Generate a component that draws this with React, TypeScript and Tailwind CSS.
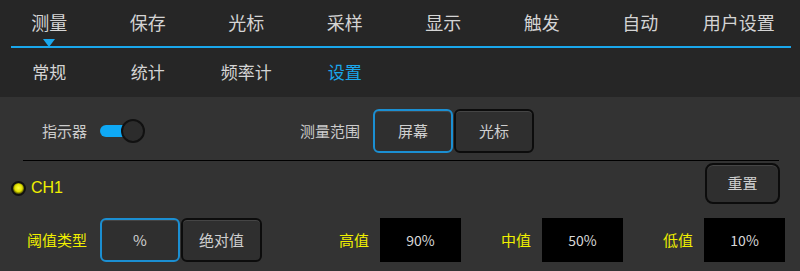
import React from 'react';

const FONT = "font-['Noto_Sans_CJK_SC','Noto_Sans',sans-serif]";

const mainTabs = ['测量', '保存', '光标', '采样', '显示', '触发', '自动', '用户设置'];
const subTabs = ['常规', '统计', '频率计', '设置'];

function SegButton({ label, active, className = '' }: { label: string; active?: boolean; className?: string }) {
  return (
    <div
      className={`flex h-[44px] w-[80px] items-center justify-center rounded-[6px] border-2 bg-[#2f2f2f] text-[15px] text-[#d0d0d0] shadow-[inset_0_1px_0_#454545] ${
        active ? 'border-[#1b8fd2]' : 'border-[#0c0c0c]'
      } ${className}`}
    >
      {label}
    </div>
  );
}

function ValueBox({ value }: { value: string }) {
  return (
    <div className="flex h-[44px] w-[81px] items-center justify-center bg-black text-[14px] text-[#d8d8d8]">
      {value}
    </div>
  );
}

export default function App() {
  return (
    <div className={`h-[271px] w-[800px] overflow-hidden bg-[#333333] ${FONT}`}>
      {/* header */}
      <div className="bg-[#262626]">
        <div className="relative flex h-[46px] items-center">
          {mainTabs.map((t, i) => (
            <div key={t} className="relative flex w-[98.5px] justify-center pb-[2px] text-[18px] text-[#d4d4d4]">
              {t}
              {i === 0 && (
                <span className="absolute left-[43px] top-[30px] h-0 w-0 border-x-[6px] border-t-[8px] border-x-transparent border-t-[#1aa7ec]" />
              )}
            </div>
          ))}
        </div>
        <div className="ml-[11px] mr-[9px] h-[2px] bg-[#1aa7ec]" />
        <div className="flex h-[49px] items-center">
          {subTabs.map((t, i) => (
            <div
              key={t}
              className={`flex w-[98.5px] justify-center pb-[1px] text-[17px] ${i === 3 ? 'text-[#1aa7ec]' : 'text-[#d4d4d4]'}`}
            >
              {t}
            </div>
          ))}
        </div>
      </div>

      {/* settings body */}
      <div className="pt-[12px]">
        <div className="flex h-[44px] items-center">
          <span className="ml-[42px] text-[15px] text-[#cccccc]">指示器</span>
          <div className="relative ml-[13px] h-[24px] w-[46px]">
            <div className="absolute left-0 top-[6px] h-[12px] w-[32px] rounded-full bg-[#0fa9f5]" />
            <div className="absolute left-[21px] top-0 h-[24px] w-[24px] rounded-full border-2 border-[#111] bg-[#2c2c2c]" />
          </div>
          <span className="ml-[154px] text-[15px] text-[#cccccc]">测量范围</span>
          <div className="ml-[13px] flex">
            <SegButton label="屏幕" active />
            <SegButton label="光标" className="ml-[1px]" />
          </div>
        </div>

        <div className="ml-[23px] mr-[21px] mt-[7px] h-px bg-black" />

        <div className="flex h-[54px] items-start">
          <div className="ml-[11px] mt-[19px] flex items-center">
            <div className="h-[15px] w-[15px] rounded-full border-2 border-[#111] bg-[radial-gradient(circle_at_50%_45%,#ffff40_0%,#e0e000_45%,#555500_70%,#222_100%)]" />
            <span className="ml-[5px] font-['Liberation_Sans',sans-serif] text-[16px] leading-none text-[#f0f000]">CH1</span>
          </div>
          <div className="ml-auto mr-[20px] mt-[2px] flex h-[41px] w-[75px] items-center justify-center rounded-[8px] border-2 border-[#0c0c0c] bg-[#2f2f2f] text-[15px] text-[#d0d0d0] shadow-[inset_0_1px_0_#454545]">
            重置
          </div>
        </div>

        <div className="mt-[3px] flex h-[44px] items-center">
          <span className="ml-[27px] text-[15px] text-[#f0f000]">阈值类型</span>
          <div className="ml-[13px] flex">
            <SegButton label="%" active />
            <SegButton label="绝对值" className="ml-[1px] w-[81px]" />
          </div>
          <span className="ml-[77px] text-[15px] text-[#f0f000]">高值</span>
          <div className="ml-[11px]">
            <ValueBox value="90%" />
          </div>
          <span className="ml-[40px] text-[15px] text-[#f0f000]">中值</span>
          <div className="ml-[11px]">
            <ValueBox value="50%" />
          </div>
          <span className="ml-[40px] text-[15px] text-[#f0f000]">低值</span>
          <div className="ml-[11px]">
            <ValueBox value="10%" />
          </div>
        </div>
      </div>
    </div>
  );
}
